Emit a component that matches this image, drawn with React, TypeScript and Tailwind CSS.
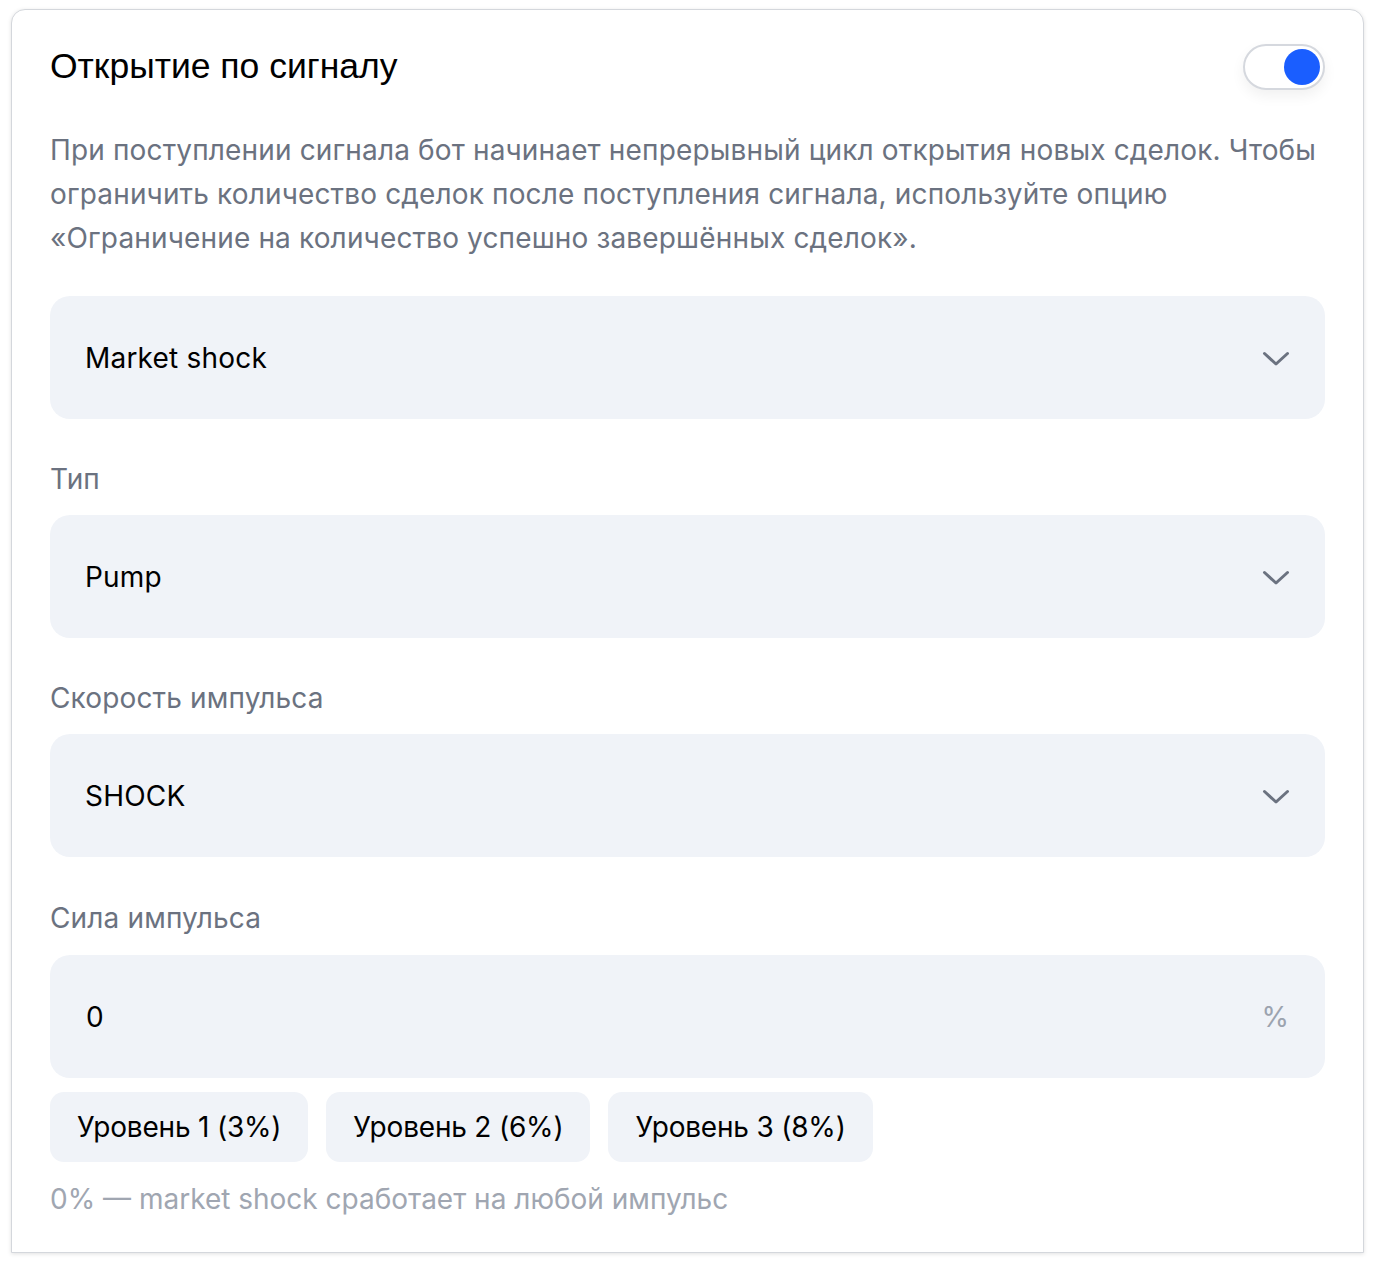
import React, { useState } from 'react';

const Chevron = () => (
  <svg width="28" height="16" viewBox="0 0 28 16" fill="none" className="mt-[3px] shrink-0">
    <path d="M2.5 2.5 L14 13 L25.5 2.5" stroke="#6b7280" strokeWidth="3" strokeLinecap="round" strokeLinejoin="round" />
  </svg>
);

const SelectBox = ({ value }: { value: string }) => (
  <div className="flex h-[123px] items-center justify-between rounded-[20px] bg-[#f0f3f8] pl-[35px] pr-[35px]">
    <span className="text-[28px] tracking-[0.2px] text-black">{value}</span>
    <Chevron />
  </div>
);

const Field = ({ label, children }: { label: string; children: React.ReactNode }) => (
  <div className="flex flex-col gap-[14px]">
    <div className="text-[28px] leading-[44px] tracking-[0.15px] text-[#6b7280]">{label}</div>
    {children}
  </div>
);

const levels = ['Уровень 1 (3%)', 'Уровень 2 (6%)', 'Уровень 3 (8%)'];

export default function App() {
  const [enabled, setEnabled] = useState(true);

  return (
    <div className="min-h-[1262px] bg-white pl-[11px] pr-[10px] pt-[9px] font-['Inter',sans-serif]">
      <div className="h-[1244px] rounded-t-[14px] border border-[#d4d7dc] bg-white px-[38px] pt-[34px] shadow-[0_1px_4px_rgba(0,0,0,0.12)]">
        <div className="flex h-[46px] items-center justify-between">
          <h2 className="font-['Liberation_Sans',sans-serif] text-[35.5px] text-black">Открытие по сигналу</h2>
          <button
            onClick={() => setEnabled(!enabled)}
            className="flex h-[46px] w-[82px] items-center rounded-full border-2 border-[#d5d8de] bg-white px-[3px] shadow-[0_6px_14px_rgba(0,0,0,0.06)]"
          >
            <span className={enabled ? 'ml-auto h-[36px] w-[36px] rounded-full bg-[#1a5eff]' : 'h-[36px] w-[36px] rounded-full bg-[#c9ced6]'} />
          </button>
        </div>

        <p className="mt-[38px] text-[28px] leading-[44px] tracking-[0.15px] text-[#6b7280]">
          При поступлении сигнала бот начинает непрерывный цикл открытия новых сделок. Чтобы ограничить количество сделок
          после поступления сигнала, используйте опцию «Ограничение на количество успешно завершённых сделок».
        </p>

        <div className="mt-[36px] flex flex-col gap-[38px]">
          <SelectBox value="Market shock" />
          <Field label="Тип">
            <SelectBox value="Pump" />
          </Field>
          <Field label="Скорость импульса">
            <SelectBox value="SHOCK" />
          </Field>
          <div className="mt-[1px] flex flex-col">
            <Field label="Сила импульса">
              <div className="mt-[1px] flex h-[123px] items-center justify-between rounded-[20px] bg-[#f0f3f8] px-[36px]">
                <span className="text-[28px] text-black">0</span>
                <span className="text-[28px] text-[#9ca3af]">%</span>
              </div>
            </Field>
            <div className="mt-[14px] flex gap-[18px]">
              {levels.map((l) => (
                <button key={l} className="h-[70px] rounded-[14px] bg-[#f0f3f8] px-[27px] text-[28px] tracking-[-0.2px] text-black">
                  {l}
                </button>
              ))}
            </div>
            <div className="mt-[15px] text-[28px] leading-[44px] text-[#a0a6b1]">0% — market shock сработает на любой импульс</div>
          </div>
        </div>
      </div>
    </div>
  );
}
